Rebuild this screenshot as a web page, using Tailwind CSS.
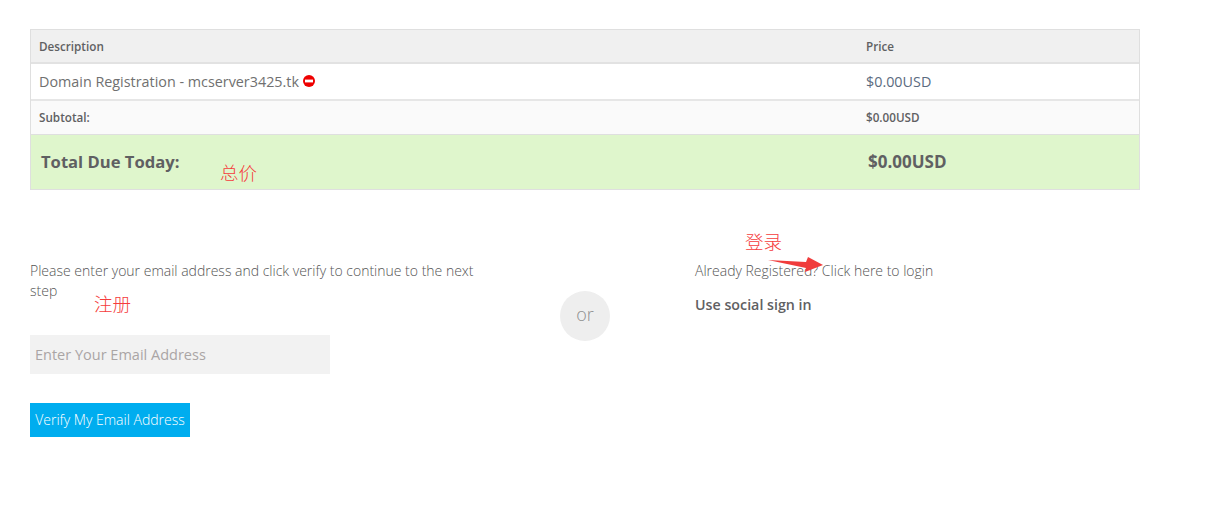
<!DOCTYPE html>
<html lang="en">
<head>
    <meta charset="UTF-8">
    <meta name="viewport" content="width=device-width, initial-scale=1.0">
    <title>Checkout</title>
    <script src="https://cdn.jsdelivr.net/npm/@tailwindcss/browser@4"></script>
</head>
<body class="relative h-[521px] overflow-hidden bg-white font-['Open_Sans',sans-serif] text-[#5f6062]">
    <div class="pt-[29px] pl-[30px] w-[1140px]">
        <!-- Order summary -->
        <div class="border border-[#dfdfdf]">
            <div class="flex h-[34px] items-center bg-[#f0f0f0] border-b-2 border-[#e2e2e2] pt-px text-[11.7px] font-semibold">
                <div class="w-[835px] pl-2">Description</div>
                <div>Price</div>
            </div>
            <div class="flex h-[37px] items-center border-b-2 border-[#e6e6e6] text-[14.35px]">
                <div class="w-[835px] pl-2 flex items-center gap-1 text-[#707070]">
                    Domain Registration - mcserver3425.tk
                    <svg class="w-3 h-3" viewBox="0 0 12 12"><circle cx="6" cy="6" r="6" fill="#ee0000"/><rect x="2" y="4.6" width="8" height="2.8" fill="#ffffff"/></svg>
                </div>
                <div class="text-[#5b6b80]">$0.00USD</div>
            </div>
            <div class="flex h-[34px] items-center bg-[#fafafa] border-b border-[#dfdfdf] text-[11.7px] font-semibold">
                <div class="w-[835px] pl-2">Subtotal:</div>
                <div>$0.00USD</div>
            </div>
            <div class="flex h-[54px] items-center bg-[#dff6cc] text-[16.6px] font-bold">
                <div class="w-[837px] pl-2.5">Total Due Today:</div>
                <div class="text-[17px]">$0.00USD</div>
            </div>
        </div>

        <!-- Register or login -->
        <div class="flex mt-[71px]">
            <div class="w-[530px]">
                <p class="w-[460px] text-sm leading-5 font-light text-[#555555]">Please enter your email address and click verify to continue to the next step</p>
                <div class="mt-[34px] flex h-[39px] w-[300px] items-center bg-[#f2f2f2] pl-[5px] text-[14.5px] text-[#aaa5a5]">Enter Your Email Address</div>
                <button class="mt-[29px] h-[34px] w-[160px] bg-[#00adef] text-sm font-light text-white">Verify My Email Address</button>
            </div>
            <div class="w-[135px] pt-[30px]">
                <div class="flex h-[50px] w-[50px] items-center justify-center rounded-full bg-[#eeeeee] pb-1 text-lg font-light text-[#8f8f8f]">or</div>
            </div>
            <div>
                <p class="text-sm leading-5 font-light text-[#555555]">Already Registered? Click here to login</p>
                <p class="mt-[14px] text-[14.25px] leading-5 font-semibold">Use social sign in</p>
            </div>
        </div>
    </div>

    <!-- Red annotations drawn on top of the screenshot -->
    <span class="absolute left-[220px] top-[160px] text-[18.5px] leading-6 font-light text-[#f53c3c] font-['Noto_Sans_CJK_SC',sans-serif]">总价</span>
    <span class="absolute left-[94px] top-[291px] text-[18.5px] leading-6 font-light text-[#f53c3c] font-['Noto_Sans_CJK_SC',sans-serif]">注册</span>
    <span class="absolute left-[745px] top-[229px] text-[18.5px] leading-6 font-light text-[#f53c3c] font-['Noto_Sans_CJK_SC',sans-serif]">登录</span>
    <svg class="absolute left-[765px] top-[254px]" width="60" height="20" viewBox="0 0 60 20"><path d="M3 6 L41 8 L43 3 L58 11 L40 18 L41 14 Z" fill="#f03c3c"/></svg>
</body>
</html>
